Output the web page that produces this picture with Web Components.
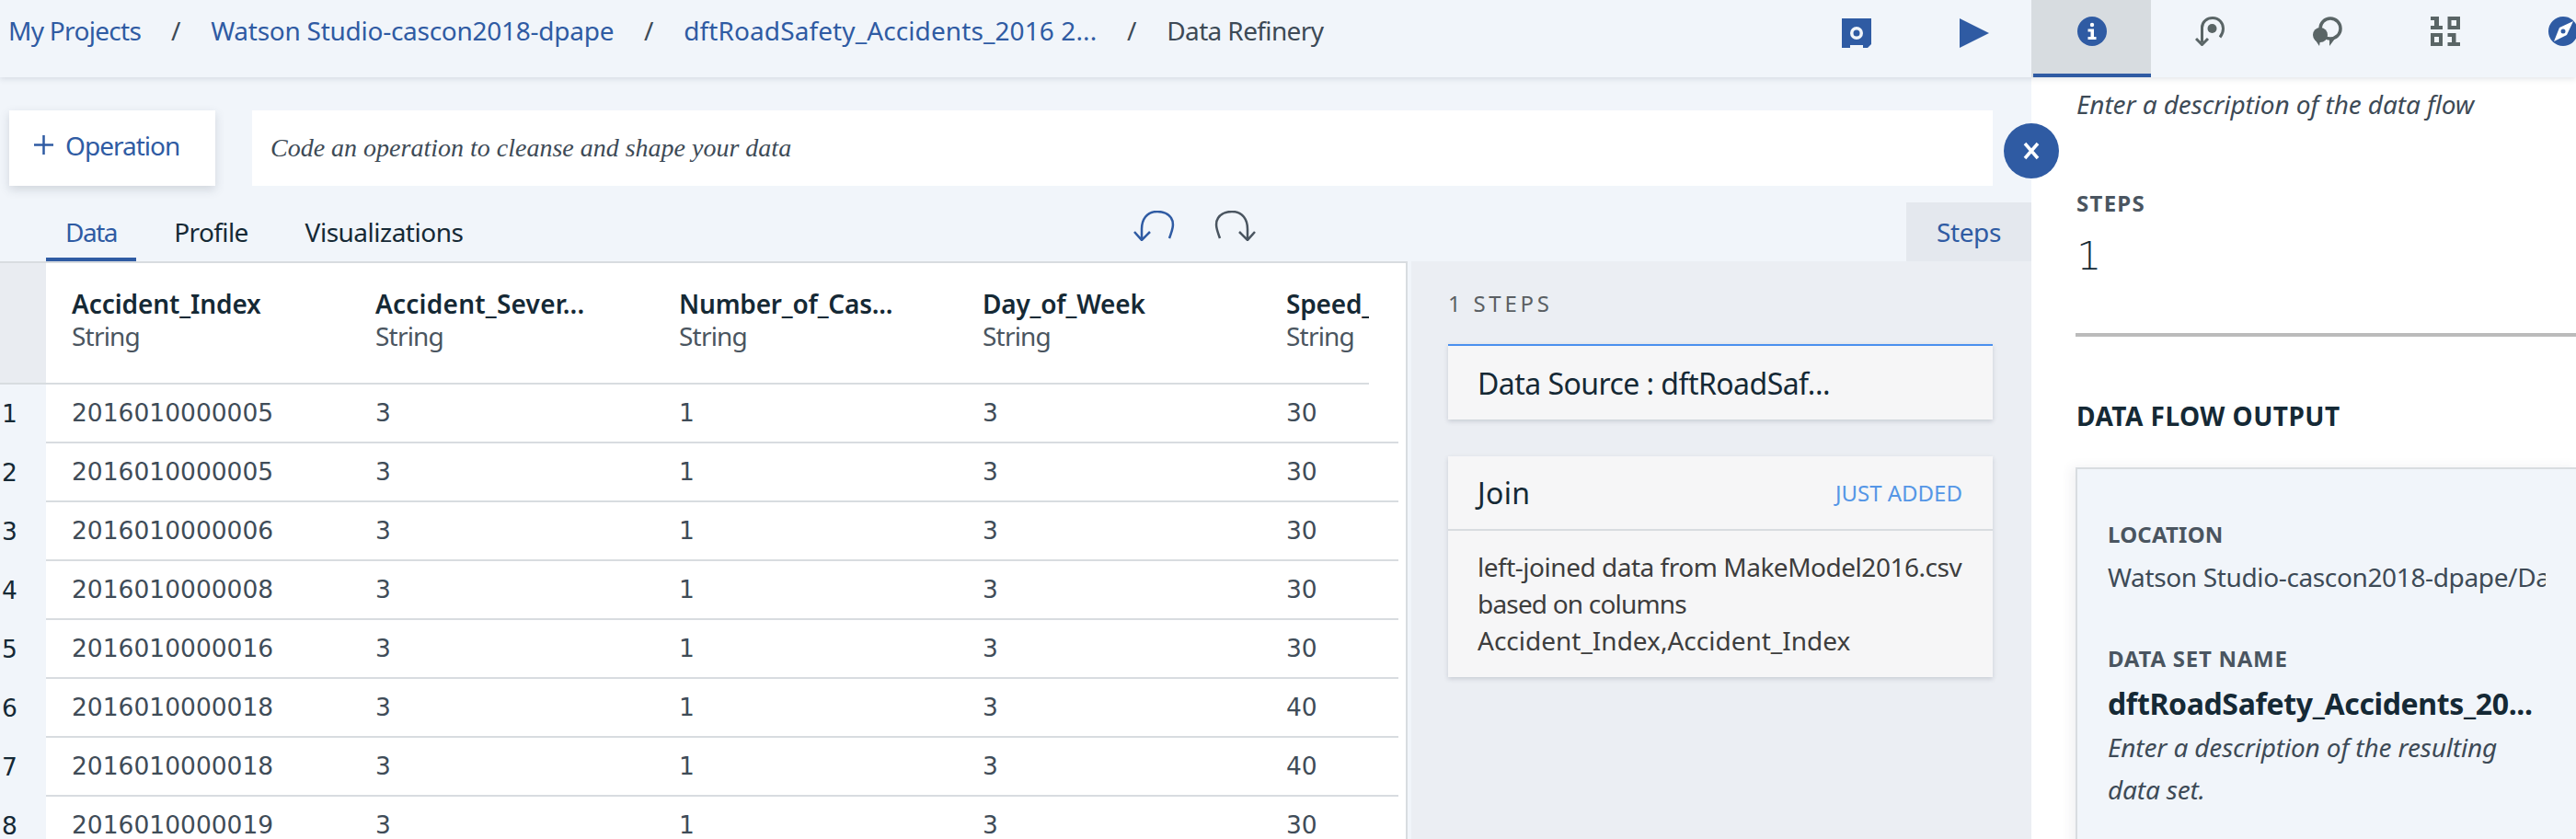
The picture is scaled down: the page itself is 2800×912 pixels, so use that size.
<!DOCTYPE html>
<html lang="en">
<head>
<meta charset="utf-8">
<title>Data Refinery</title>
<style>
	html, body {
		margin: 0;
		width: 2800px;
		height: 912px;
		overflow: hidden;
		background: #f1f5fa;
		font-family: "Noto Sans", "Open Sans", sans-serif;
		font-size: 28px;
		color: #152935;
	}

	.page {
		display: grid;
		grid-template-columns: 2208px 592px;
		grid-template-rows: 84px 828px;
		width: 2800px;
		height: 912px;
	}

	.work {
		display: flex;
		flex-direction: column;
		min-width: 0;
	}
</style>
</head>
<body>
<div class="page">
	<df-topbar style="grid-column: 1 / 3"></df-topbar>
	<div class="work">
		<df-opbar></df-opbar>
		<df-viewtabs></df-viewtabs>
		<df-workspace>
			<df-table slot="table"></df-table>
			<df-steps slot="steps">
				<df-stepcard heading="Data Source : dftRoadSaf..." spacing="-.55px" first></df-stepcard>
				<df-stepcard heading="Join" spacing=".3px" badge="JUST ADDED">
					<span style="letter-spacing: -.48px">left-joined data from MakeModel2016.csv</span><br>
					<span style="letter-spacing: -.82px">based on columns</span><br>
					<span>Accident_Index,Accident_Index</span>
				</df-stepcard>
			</df-steps>
		</df-workspace>
	</div>
	<df-info></df-info>
</div>

<script>
const BLUE = '#2f5ba3';
const GREY = '#5a6566';

const ICONS = {
	disk: `<path fill="${BLUE}" fill-rule="evenodd" d="M0 0H32V28L28 32H23V29H9V32H0ZM16 9a7 7 0 1 0 0 14a7 7 0 1 0 0-14ZM16 12.500a3.500 3.500 0 1 1 0 7a3.500 3.500 0 1 1 0-7Z"/>`,
	play: `<path fill="${BLUE}" d="M0 0L32 16L0 32Z"/>`,
	info: `<circle cx="16" cy="16" r="16" fill="${BLUE}"/><circle cx="16" cy="9" r="2.200" fill="#fff"/><path fill="#fff" d="M11.500 13.500H18V22H20.500V25H11.500V22H14.500V16.500H11.500Z"/>`,
	history: `<circle cx="18.500" cy="13" r="5" fill="${GREY}"/><path fill="none" stroke="${GREY}" stroke-width="3" d="M7.500 28V12C7.500 5.500 13 1.500 19 1.500C26 1.500 30.500 7 30.500 13C30.500 17 29 20 27 22.500"/><path fill="none" stroke="${GREY}" stroke-width="3" d="M1 24L7.500 30.500L14 24"/>`,
	pins: `<circle cx="19" cy="13" r="11" fill="none" stroke="${GREY}" stroke-width="3.500"/><path fill="${GREY}" d="M27 20L18 32V24ZM1 23L7 32L8 26L14 25Z"/><circle cx="8" cy="20" r="8" fill="${GREY}"/>`,
	binary: `<path fill="${GREY}" fill-rule="evenodd" d="M0 0H9V10H13V14H0V10H4V4H0ZM18.500 0H32V14H18.500ZM22.500 4V10H28V4ZM0 18H13V32H0ZM4 22V28H9V22ZM18.500 18H27.500V28H32V32H18.500V28H23V22H18.500Z"/>`,
	compass: `<circle cx="16" cy="16" r="16" fill="${BLUE}"/><path fill="#fff" fill-rule="evenodd" d="M27 5L20 20L6 27L12 12ZM16 13.500a2.500 2.500 0 1 0 0 5a2.500 2.500 0 1 0 0-5Z"/>`,
	undo: `<path fill="none" stroke="currentColor" stroke-width="2.500" d="M39 30C42 22 45 14 41 8C37 2 32 1 26 1C14 1 9 10 9 20V31M1 23L9 32L18 23"/>`
};

function icon(name, width = 32, height = 32) {
	return `<svg width="${width}" height="${height}" viewBox="0 0 ${width} ${height}">${ICONS[name]}</svg>`;
}

class DfTopbar extends HTMLElement {
	constructor() {
		super();
		this.attachShadow({mode: 'open'});
		this.shadowRoot.innerHTML = `
			<style>
				:host {
					display: flex;
					position: relative;
					z-index: 2;
					height: 84px;
					background: #f1f5fa;
					box-shadow: 0 2px 6px rgba(60, 70, 90, .14);
				}

				nav {
					display: flex;
					flex: 1;
					padding: 14px 0 0 9px;
					line-height: 38px;
				}

				a {
					color: #2f5ba3;
					text-decoration: none;
					white-space: nowrap;
				}

				i {
					font-style: normal;
					color: #3d4a56;
					width: 76px;
					text-align: center;
				}

				span {
					color: #3d4a56;
					letter-spacing: -.63px;
				}

				.actions {
					display: flex;
					gap: 96px;
					padding: 20px 46px 0 0;
				}

				.tabs {
					display: flex;
					width: 592px;
					flex: none;
				}

				.tab {
					box-sizing: border-box;
					width: 128px;
					height: 84px;
					padding: 18px 0 0 48px;
					flex: none;
				}

				.tab.active {
					width: 130px;
					padding-left: 50px;
					background: linear-gradient(#2f5ba3, #2f5ba3) 2px 100% / calc(100% - 2px) 4px no-repeat, #d7dce0;
				}

				svg {
					display: block;
				}
			</style>
			<nav>
				<a style="letter-spacing: -.7px">My Projects</a><i>/</i>
				<a style="letter-spacing: -.26px">Watson Studio-cascon2018-dpape</a><i>/</i>
				<a style="letter-spacing: .1px">dftRoadSafety_Accidents_2016 2...</a><i>/</i>
				<span>Data Refinery</span>
			</nav>
			<div class="actions">${icon('disk')}${icon('play')}</div>
			<div class="tabs">
				<div class="tab active">${icon('info')}</div>
				<div class="tab">${icon('history')}</div>
				<div class="tab">${icon('pins')}</div>
				<div class="tab">${icon('binary')}</div>
				<div class="tab">${icon('compass')}</div>
			</div>
		`;
	}
}

class DfOpbar extends HTMLElement {
	constructor() {
		super();
		this.attachShadow({mode: 'open'});
		this.shadowRoot.innerHTML = `
			<style>
				:host {
					display: flex;
					gap: 40px;
					position: relative;
					height: 82px;
					padding: 36px 42px 0 10px;
				}

				button {
					display: flex;
					align-items: center;
					gap: 13px;
					width: 224px;
					padding: 0 0 7px 27px;
					border: 0;
					background: #fff;
					color: #2f5ba3;
					font: inherit;
					letter-spacing: -.98px;
					box-shadow: 0 4px 10px rgba(60, 70, 90, .18);
				}

				svg {
					flex: none;
				}

				.code {
					flex: 1;
					display: flex;
					align-items: center;
					padding: 0 0 0 20px;
					background: #fff;
					color: #3d4a56;
					font: italic 28px "Liberation Serif", serif;
				}

				.close {
					position: absolute;
					top: 50px;
					left: 2178px;
					width: 60px;
					height: 60px;
					border-radius: 50%;
					background: #2f5ba3;
					z-index: 3;
				}

				.close svg {
					display: block;
					margin: 20px;
				}
			</style>
			<button><svg width="21" height="21" viewBox="0 0 21 21"><path fill="none" stroke="currentColor" stroke-width="2.500" d="M10.500 0V21M0 10.500H21"/></svg>Operation</button>
			<div class="code">Code an operation to cleanse and shape your data</div>
			<div class="close"><svg width="20" height="20" viewBox="0 0 20 20"><path fill="none" stroke="#fff" stroke-width="3.500" d="M3 2L17 18M17 2L3 18"/></svg></div>
		`;
	}
}

class DfViewtabs extends HTMLElement {
	constructor() {
		super();
		this.attachShadow({mode: 'open'});
		this.shadowRoot.innerHTML = `
			<style>
				:host {
					display: flex;
					gap: 20px;
					height: 82px;
					padding-left: 50px;
				}

				.tab {
					align-self: flex-end;
					box-sizing: border-box;
					height: 60px;
					padding-top: 9px;
					line-height: 38px;
					text-align: center;
				}

				.tab.active {
					color: #2f5ba3;
					box-shadow: inset 0 -4px 0 #2f5ba3;
				}

				.history {
					display: flex;
					gap: 43px;
					margin: 27px 0 0 688px;
				}

				.undo {
					color: #2f5ba3;
				}

				.redo {
					color: #4a5560;
					transform: scaleX(-1);
				}

				.steps {
					align-self: flex-end;
					box-sizing: border-box;
					width: 136px;
					height: 64px;
					margin-left: auto;
					padding-top: 13px;
					background: #e4e8ee;
					color: #2f5ba3;
					line-height: 38px;
					letter-spacing: -.4px;
					text-align: center;
				}
			</style>
			<div class="tab active" style="width: 98px; letter-spacing: -1.5px">Data</div>
			<div class="tab" style="width: 123px; letter-spacing: -.63px">Profile</div>
			<div class="tab" style="width: 213px; letter-spacing: -.5px">Visualizations</div>
			<div class="history">
				<div class="undo">${icon('undo', 45, 33)}</div>
				<div class="redo">${icon('undo', 45, 33)}</div>
			</div>
			<div class="steps">Steps</div>
		`;
	}
}

class DfWorkspace extends HTMLElement {
	constructor() {
		super();
		this.attachShadow({mode: 'open'});
		this.shadowRoot.innerHTML = `
			<style>
				:host {
					display: flex;
					height: 628px;
					overflow: hidden;
				}
			</style>
			<slot name="table"></slot>
			<slot name="steps"></slot>
		`;
	}
}

class DfTable extends HTMLElement {
	#columns = [
		['Accident_Index', -.1],
		['Accident_Sever...', .23],
		['Number_of_Cas...', -.2],
		['Day_of_Week', -.2],
		['Speed_', -.2]
	];

	#rows = [
		['2016010000005', 3, 1, 3, 30],
		['2016010000005', 3, 1, 3, 30],
		['2016010000006', 3, 1, 3, 30],
		['2016010000008', 3, 1, 3, 30],
		['2016010000016', 3, 1, 3, 30],
		['2016010000018', 3, 1, 3, 40],
		['2016010000018', 3, 1, 3, 40],
		['2016010000019', 3, 1, 3, 30]
	];

	constructor() {
		super();
		this.attachShadow({mode: 'open'});
		const heads = this.#columns.map(([name, spacing]) => `<div class="cell"><b style="letter-spacing: ${spacing}px">${name}</b><span>String</span></div>`).join('');
		const rows = this.#rows.map((row, index) => `
			<div class="row">
				<div class="num">${index + 1}</div>
				<div class="cells">${row.map(value => `<div class="cell">${value}</div>`).join('')}</div>
			</div>`).join('');
		this.shadowRoot.innerHTML = `
			<style>
				:host {
					display: block;
					box-sizing: border-box;
					flex: none;
					width: 1530px;
					height: 628px;
					margin-right: 4px;
					border-top: 2px solid #d8dce0;
					border-right: 2px solid #d8dce0;
					background: #fff;
					overflow: hidden;
				}

				.head {
					display: flex;
					height: 132px;
				}

				.corner {
					width: 50px;
					flex: none;
					background: #e9ecf1;
					border-bottom: 2px solid #d8dce0;
				}

				.head .cells {
					box-sizing: border-box;
					width: 1438px;
					flex: none;
					padding-top: 26px;
					border-bottom: 2px solid #d8dce0;
				}

				.cells {
					display: flex;
					overflow: hidden;
					width: 1470px;
					flex: none;
				}

				.cell {
					box-sizing: border-box;
					width: 330px;
					flex: none;
					padding-left: 28px;
					white-space: nowrap;
				}

				b, span {
					display: block;
					line-height: 37px;
				}

				b {
					font-weight: 600;
					color: #152935;
				}

				span {
					margin-top: -2px;
					color: #4a5560;
					letter-spacing: -.8px;
				}

				.row {
					display: flex;
					height: 64px;
				}

				.num {
					box-sizing: border-box;
					width: 50px;
					flex: none;
					padding: 13px 0 0 2px;
					background: #f1f5fa;
					font-family: "DejaVu Sans", sans-serif;
					font-size: 26.500px;
					line-height: 38px;
				}

				.row .cells {
					box-sizing: border-box;
					border-bottom: 2px solid #d8dce0;
					font-family: "DejaVu Sans", sans-serif;
					font-size: 26.500px;
					line-height: 61px;
					color: #3f4c58;
				}
			</style>
			<div class="head"><div class="corner"></div><div class="cells">${heads}</div></div>
			${rows}
		`;
	}
}

class DfSteps extends HTMLElement {
	constructor() {
		super();
		this.attachShadow({mode: 'open'});
		this.shadowRoot.innerHTML = `
			<style>
				:host {
					display: block;
					flex: 1;
					min-width: 0;
					padding: 28px 42px 0 40px;
					background: #ebeef3;
				}

				h2 {
					margin: 0 0 26px;
					font-size: 24px;
					font-weight: 400;
					line-height: 36px;
					letter-spacing: 3.740px;
					color: #5a5f63;
				}

				.list {
					display: flex;
					flex-direction: column;
					gap: 40px;
				}
			</style>
			<h2>1 STEPS</h2>
			<div class="list"><slot></slot></div>
		`;
	}
}

class DfStepcard extends HTMLElement {
	constructor() {
		super();
		this.attachShadow({mode: 'open'});
		const badge = this.getAttribute('badge');
		this.shadowRoot.innerHTML = `
			<style>
				:host {
					display: block;
					background: #f6f6f7;
					box-shadow: 0 2px 5px rgba(60, 70, 90, .2);
				}

				:host([first]) {
					border-top: 2px solid #4a90ee;
				}

				header {
					display: flex;
					align-items: center;
					justify-content: space-between;
					box-sizing: border-box;
					height: 80px;
					padding: 0 33px 0 32px;
					font-size: 32px;
					letter-spacing: ${this.getAttribute('spacing') || 0};
					color: #152935;
				}

				:host(:not([first])) header {
					height: 79px;
				}

				em {
					font-style: normal;
					font-size: 24px;
					letter-spacing: 0;
					color: #5596e6;
				}

				.body {
					padding: 19px 33px 20px 32px;
					border-top: 2px solid #d8dce0;
					line-height: 40px;
					color: #3d3d3d;
					white-space: nowrap;
				}

				:host([first]) .body {
					display: none;
				}
			</style>
			<header>${this.getAttribute('heading')}${badge ? `<em>${badge}</em>` : ''}</header>
			<div class="body"><slot></slot></div>
		`;
	}
}

class DfInfo extends HTMLElement {
	constructor() {
		super();
		this.attachShadow({mode: 'open'});
		this.shadowRoot.innerHTML = `
			<style>
				:host {
					display: block;
					height: 828px;
					padding: 9px 0 0 49px;
					background: #fff;
					overflow: hidden;
					box-sizing: border-box;
					color: #3d4a56;
				}

				p {
					margin: 0;
					font-style: italic;
					line-height: 40px;
					letter-spacing: -.1px;
					white-space: nowrap;
				}

				h3, h4 {
					margin: 0;
					font-weight: 700;
				}

				h3 {
					margin-top: 70px;
					font-size: 24px;
					line-height: 36px;
					letter-spacing: 1.280px;
					color: #4a5560;
				}

				.count {
					box-sizing: border-box;
					height: 120px;
					margin: 7px 0 0 -1px;
					padding: 5px 0 0 1px;
					border-bottom: 4px solid #bbb;
					font-family: "DejaVu Sans ExtraLight", "DejaVu Sans", sans-serif;
					font-weight: 200;
					font-size: 43px;
					line-height: 54px;
					color: #152935;
				}

				h4 {
					margin-top: 66px;
					font-size: 28px;
					line-height: 40px;
					letter-spacing: .47px;
					color: #152935;
				}

				.box {
					box-sizing: border-box;
					height: 430px;
					margin: 36px -2px 0 -1px;
					padding: 53px 0 0 33px;
					border: 2px solid #d8dce0;
					background: #f1f5fa;
					box-shadow: -4px 0 12px rgba(60, 70, 90, .08);
				}

				.label {
					font-size: 24px;
					font-weight: 700;
					line-height: 36px;
					color: #4a5560;
				}

				.path {
					width: 476px;
					margin-top: 9px;
					overflow: hidden;
					line-height: 38px;
					letter-spacing: -.36px;
					white-space: nowrap;
				}

				.box .label + .path + .label {
					margin-top: 52px;
				}

				.name {
					margin-top: 7px;
					font-size: 32px;
					font-weight: 700;
					line-height: 48px;
					letter-spacing: -.36px;
					color: #152935;
				}

				.note {
					width: 440px;
					line-height: 46px;
					letter-spacing: -.15px;
					white-space: normal;
				}
			</style>
			<p>Enter a description of the data flow</p>
			<h3>STEPS</h3>
			<div class="count">1</div>
			<h4>DATA FLOW OUTPUT</h4>
			<div class="box">
				<div class="label" style="letter-spacing: .2px">LOCATION</div>
				<div class="path">Watson Studio-cascon2018-dpape/Data</div>
				<div class="label" style="letter-spacing: .74px">DATA SET NAME</div>
				<div class="name">dftRoadSafety_Accidents_20...</div>
				<p class="note">Enter a description of the resulting data set.</p>
			</div>
		`;
	}
}

customElements.define('df-topbar', DfTopbar);
customElements.define('df-opbar', DfOpbar);
customElements.define('df-viewtabs', DfViewtabs);
customElements.define('df-workspace', DfWorkspace);
customElements.define('df-table', DfTable);
customElements.define('df-steps', DfSteps);
customElements.define('df-stepcard', DfStepcard);
customElements.define('df-info', DfInfo);
</script>
</body>
</html>
